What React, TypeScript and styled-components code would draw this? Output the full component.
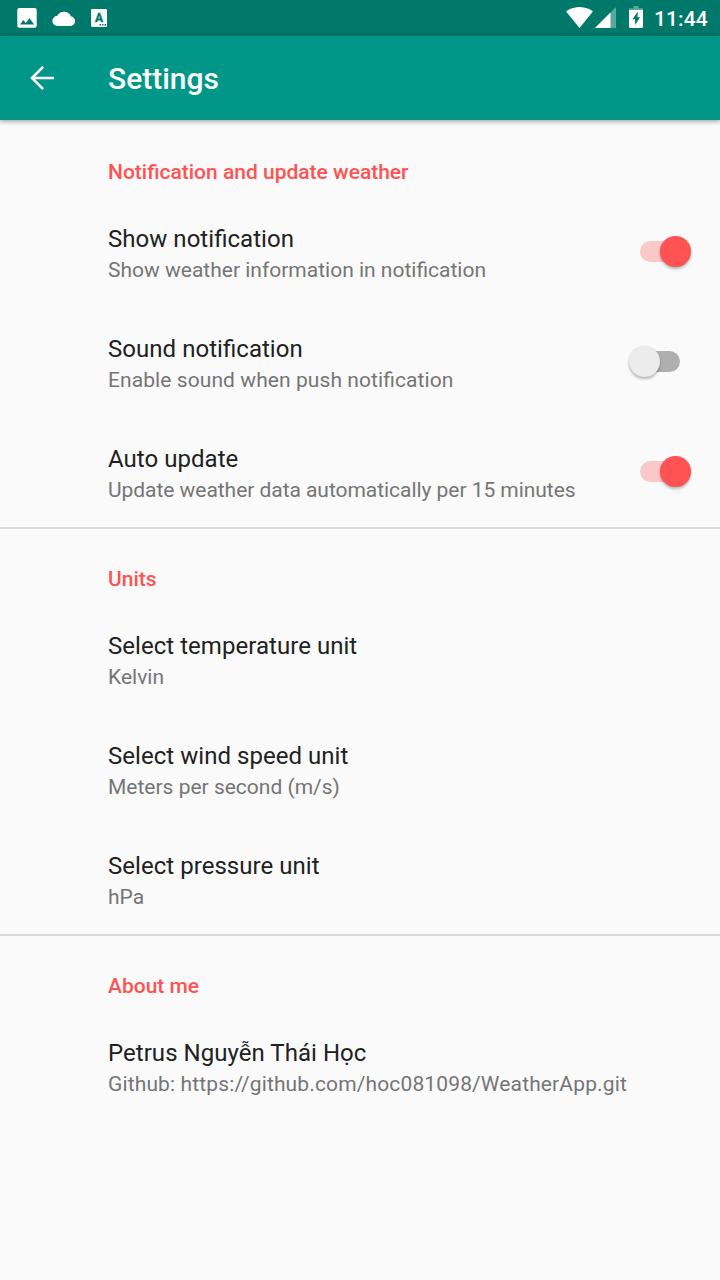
import React from 'react';
import styled, { createGlobalStyle } from 'styled-components';

const GlobalStyle = createGlobalStyle`
  * { box-sizing: border-box; }
  body {
    margin: 0;
    background: #fafafa;
    font-family: Roboto, "Noto Sans", sans-serif;
    font-feature-settings: "liga" 1;
  }
`;

const Screen = styled.div`
  width: 720px;
  height: 1280px;
  display: flex;
  flex-direction: column;
  overflow: hidden;
  background: #fafafa;
`;

const StatusBar = styled.div`
  height: 36px;
  flex: none;
  display: flex;
  justify-content: space-between;
  background: #00796b;
  color: #fff;
`;

const StatusGroup = styled.div`
  display: flex;
  height: 36px;
`;

const Clock = styled.span`
  width: 70px;
  padding-left: 4px;
  font-size: 21px;
  font-weight: 500;
  line-height: 38px;
  letter-spacing: 0.1px;
  white-space: nowrap;
`;

const AppBar = styled.header`
  height: 84px;
  flex: none;
  display: flex;
  align-items: center;
  padding-left: 24px;
  background: #009688;
  color: #fff;
  box-shadow: 0 1px 5px rgba(0, 0, 0, 0.42);
`;

const BackButton = styled.button`
  width: 36px;
  height: 36px;
  padding: 0;
  border: 0;
  background: none;
  color: inherit;
  svg { display: block; }
`;

const AppTitle = styled.h1`
  margin: 2px 0 0 48px;
  font-size: 30px;
  font-weight: 500;
  line-height: 36px;
`;

const Section = styled.section<{ $divided?: boolean }>`
  border-top: ${(p) => (p.$divided ? '2px solid #dadada' : '0')};
  padding-top: ${(p) => (p.$divided ? '0' : '2px')};
`;

const Category = styled.h2`
  height: 75px;
  margin: 0;
  padding: 36px 0 0 108px;
  color: #ff5252;
  font-size: 21px;
  font-weight: 500;
  line-height: 28px;
`;

const Row = styled.div`
  height: 110px;
  display: flex;
  justify-content: space-between;
  padding: 26px 24px 0 108px;
`;

const Label = styled.div`
  color: #212121;
  font-size: 24px;
  line-height: 32px;
  letter-spacing: 0.04px;
`;

const Summary = styled.div<{ $tracking: number }>`
  color: #757575;
  font-size: 21px;
  line-height: 30px;
  letter-spacing: ${(p) => p.$tracking}px;
`;

const Switch = styled.div<{ $on: boolean }>`
  width: 72px;
  height: 31px;
  margin-top: 13px;
  display: flex;
  align-items: center;
  padding-left: 16px;
  &::before {
    content: '';
    width: 40px;
    height: 21px;
    flex: none;
    border-radius: 11px;
    background: ${(p) => (p.$on ? '#fbc8c8' : '#afafaf')};
  }
`;

const Thumb = styled.span<{ $on: boolean }>`
  position: relative;
  flex: none;
  left: ${(p) => (p.$on ? '-20px' : '-51px')};
  width: 31px;
  height: 31px;
  border-radius: 50%;
  background: ${(p) => (p.$on ? '#ff5252' : '#ececec')};
  box-shadow: 0 2px 3px rgba(0, 0, 0, 0.27), 0 0 1px rgba(0, 0, 0, 0.12);
`;

interface Item {
  label: string;
  summary: string;
  tracking?: number;
  on?: boolean;
}

const sections: { title: string; items: Item[] }[] = [
  {
    title: 'Notification and update weather',
    items: [
      { label: 'Show notification', summary: 'Show weather information in notification', on: true },
      { label: 'Sound notification', summary: 'Enable sound when push notification', tracking: 0.08, on: false },
      {
        label: 'Auto update',
        summary: 'Update weather data automatically per 15 minutes',
        tracking: -0.045,
        on: true,
      },
    ],
  },
  {
    title: 'Units',
    items: [
      { label: 'Select temperature unit', summary: 'Kelvin' },
      { label: 'Select wind speed unit', summary: 'Meters per second (m/s)' },
      { label: 'Select pressure unit', summary: 'hPa' },
    ],
  },
  {
    title: 'About me',
    items: [
      {
        label: 'Petrus Nguyễn Thái Học',
        summary: 'Github: https://github.com/hoc081098/WeatherApp.git',
        tracking: 0.135,
      },
    ],
  },
];

const NotificationIcons = () => (
  <svg width="120" height="36" viewBox="0 0 120 36" fill="#fff">
    <path
      fillRule="evenodd"
      d="M19.3 8h15.4c1.200 0 2 .9 2 2v15.800c0 1.200-.9 2-2 2H19.300c-1.200 0-2-.9-2-2V10c0-1.100.9-2 2-2zM20 24.500h14.200l-4.700-6.200-3.700 4.700-2.500-3z"
    />
    <path d="M57.600 26a5.100 5.100 0 0 1-.3-10.200 7.600 7.600 0 0 1 13.600.5A4.900 4.900 0 0 1 69.400 26z" />
    <path
      fillRule="evenodd"
      d="M92.300 9h13.500c.8 0 1.200.5 1.200 1.200v15.600c0 .8-.5 1.200-1.200 1.200H92.300c-.8 0-1.200-.5-1.200-1.200V10.200c0-.7.4-1.200 1.200-1.200zM99.500 24v1.500h1.500V24zM102 24v1.500h1.500V24zM104.500 24v1.500h1.500V24z"
    />
    <text x="99" y="22" fill="#00796b" stroke="#00796b" strokeWidth=".4" fontSize="12" fontWeight="700" textAnchor="middle">
      A
    </text>
  </svg>
);

const SystemIcons = () => (
  <svg width="90" height="36" viewBox="560 0 90 36" fill="#fff">
    <path d="M579.500 28L592.900 11.500C592.300 11 587.200 7 579.500 7S566.700 11 566.100 11.500z" />
    <path d="M595 28L616 7v21z" opacity=".35" />
    <path d="M595 28L610.500 12.500V28z" />
    <path d="M633.500 6h5v2.300h4.500v3h-14v-3h4.500z" opacity=".35" />
    <path
      fillRule="evenodd"
      d="M629 10h14v16.800c0 .7-.5 1.200-1.200 1.200h-11.600c-.7 0-1.200-.5-1.200-1.200zM637.900 11.600l-5.500 7.700h2.700v5.700l5-7.800h-2.700z"
    />
  </svg>
);

const ArrowBack = () => (
  <svg width="36" height="36" viewBox="0 0 36 36" fill="none" stroke="currentColor" strokeWidth="2.600">
    <path d="M30 18H8.500M19.100 6.900L8 18l11.100 11.100" />
  </svg>
);

export default function App() {
  return (
    <Screen>
      <GlobalStyle />
      <StatusBar>
        <StatusGroup>
          <NotificationIcons />
        </StatusGroup>
        <StatusGroup>
          <SystemIcons />
          <Clock>11:44</Clock>
        </StatusGroup>
      </StatusBar>
      <AppBar>
        <BackButton aria-label="Back">
          <ArrowBack />
        </BackButton>
        <AppTitle>Settings</AppTitle>
      </AppBar>
      <main>
        {sections.map((section, i) => (
          <Section key={section.title} $divided={i > 0}>
            <Category>{section.title}</Category>
            {section.items.map((item) => (
              <Row key={item.label}>
                <div>
                  <Label>{item.label}</Label>
                  <Summary $tracking={item.tracking ?? 0}>{item.summary}</Summary>
                </div>
                {item.on !== undefined && (
                  <Switch $on={item.on} role="switch" aria-checked={item.on}>
                    <Thumb $on={item.on} />
                  </Switch>
                )}
              </Row>
            ))}
          </Section>
        ))}
      </main>
    </Screen>
  );
}
